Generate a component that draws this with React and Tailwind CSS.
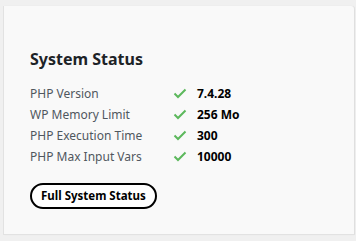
import React from 'react';

const rows = [
    { label: 'PHP Version', value: '7.4.28' },
    { label: 'WP Memory Limit', value: '256 Mo' },
    { label: 'PHP Execution Time', value: '300' },
    { label: 'PHP Max Input Vars', value: '10000' },
];

const CheckIcon = () => (
    <svg width="14" height="11" viewBox="0 0 14 11" className="shrink-0">
        <path d="M1.5 5.5 L5 9 L12.5 1.5" fill="none" stroke="#5cb85c" strokeWidth="2" />
    </svg>
);

const App = () => {
    return (
        <div className="w-[356px] h-[241px] bg-[#f0f0f0] overflow-hidden pt-[6px] pl-[3px] pr-[2px]" style={{ fontFamily: '"Noto Sans", "Open Sans", sans-serif' }}>
            <div className="bg-[#f9f9f9] h-[229px] border-l border-[#e2e2e2] border-b rounded-tr-[3px] shadow-[1px_0_1px_rgba(0,0,0,0.08)] pl-[26px] pt-[41px]">
                <h2 className="text-[16px] font-bold text-[#1d2327] leading-[24px]">System Status</h2>

                {/* status rows */}
                <div className="mt-[13px] flex flex-col gap-[2px]">
                    {rows.map((row) => (
                        <div key={row.label} className="flex items-center h-[19px]">
                            <span className="w-[143px] text-[12px] text-[#50575e]">{row.label}</span>
                            <CheckIcon />
                            <span className="ml-[10px] text-[12px] font-bold text-black">{row.value}</span>
                        </div>
                    ))}
                </div>

                <button className="mt-[17px] h-[26px] px-[9px] border-2 border-black rounded-full text-[11.5px] font-bold text-black bg-white">
                    Full System Status
                </button>
            </div>
        </div>
    );
};

export default App;
